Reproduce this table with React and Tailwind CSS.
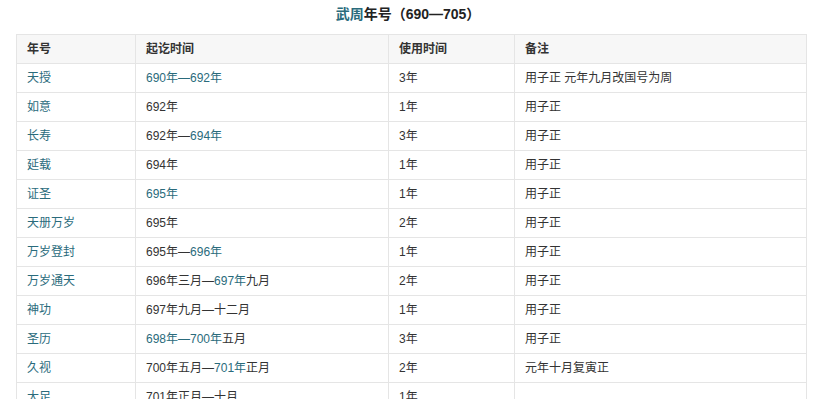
import React from 'react';

const L = ({ children }) => <span className="text-[#2a6b7c]">{children}</span>;

const rows = [
  { name: '天授', range: <L>690年—692年</L>, years: '3年', note: '用子正 元年九月改国号为周' },
  { name: '如意', range: '692年', years: '1年', note: '用子正' },
  { name: '长寿', range: <>692年—<L>694年</L></>, years: '3年', note: '用子正' },
  { name: '延载', range: '694年', years: '1年', note: '用子正' },
  { name: '证圣', range: <L>695年</L>, years: '1年', note: '用子正' },
  { name: '天册万岁', range: '695年', years: '2年', note: '用子正' },
  { name: '万岁登封', range: <>695年—<L>696年</L></>, years: '1年', note: '用子正' },
  { name: '万岁通天', range: <>696年三月—<L>697年</L>九月</>, years: '2年', note: '用子正' },
  { name: '神功', range: '697年九月—十二月', years: '1年', note: '用子正' },
  { name: '圣历', range: <><L>698年—700年</L>五月</>, years: '3年', note: '用子正' },
  { name: '久视', range: <>700年五月—<L>701年</L>正月</>, years: '2年', note: '元年十月复寅正' },
  { name: '大足', range: '701年正月—十月', years: '1年', note: '' },
];

export default function App() {
  return (
    <div
      className="w-[816px] h-[399px] overflow-hidden bg-white text-[#333] pt-[5px]"
      style={{ fontFamily: '"Liberation Sans", "Noto Sans CJK SC", sans-serif' }}
    >
      <h2 className="text-center text-[14px] font-bold leading-[18px] text-[#222]">
        <L>武周</L>年号（690—705）
      </h2>
      <table className="ml-[16px] mt-[11px] border-collapse table-fixed w-[790px] text-[12px]">
        <colgroup>
          <col className="w-[119px]" />
          <col className="w-[253px]" />
          <col className="w-[126px]" />
          <col className="w-[292px]" />
        </colgroup>
        <thead>
          <tr className="bg-[#f7f7f7] h-[29px]">
            {['年号', '起讫时间', '使用时间', '备注'].map((h) => (
              <th key={h} className="border border-[#e5e5e5] px-[10px] text-left font-bold text-[#333]">
                {h}
              </th>
            ))}
          </tr>
        </thead>
        <tbody>
          {rows.map((r) => (
            <tr key={r.name} className="h-[29px]">
              <td className="border border-[#e5e5e5] px-[10px]"><L>{r.name}</L></td>
              <td className="border border-[#e5e5e5] px-[10px]">{r.range}</td>
              <td className="border border-[#e5e5e5] px-[10px]">{r.years}</td>
              <td className="border border-[#e5e5e5] px-[10px]">{r.note}</td>
            </tr>
          ))}
        </tbody>
      </table>
    </div>
  );
}
